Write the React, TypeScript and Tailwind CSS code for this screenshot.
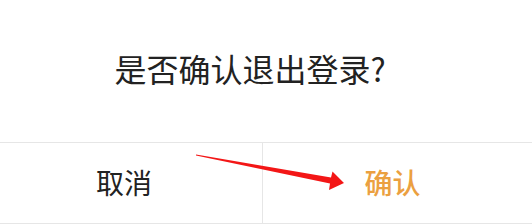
import React from "react";

export default function App() {
  return (
    <div
      className="relative w-[532px] h-[224px] bg-white overflow-hidden"
      style={{ fontFamily: '"Noto Sans CJK SC", "Noto Sans", sans-serif' }}
    >
      <div className="h-[142px] flex items-center justify-center pb-[6px] pr-[32px]">
        <span className="text-[32px] leading-none font-normal text-[#222222]">是否确认退出登录?</span>
      </div>
      <div className="flex h-[82px] border-t border-b border-[#e6e6e6]">
        <div className="w-[263px] flex items-center justify-center border-r border-[#e6e6e6] pr-[14px] pb-[2px]">
          <span className="text-[28px] leading-none font-normal text-[#222222]">取消</span>
        </div>
        <div className="flex-1 flex items-center justify-center pr-[10px] pb-[2px]">
          <span className="text-[28px] leading-none font-medium text-[#eba040]">确认</span>
        </div>
      </div>
      <svg
        className="absolute left-0 top-0 pointer-events-none"
        width="532"
        height="224"
        viewBox="0 0 532 224"
      >
        <polygon
          points="196,154.5 331,177.5 332.5,171.5 344,183 329,190 330,183.5 196,155.5"
          fill="#f31616"
        />
      </svg>
    </div>
  );
}
